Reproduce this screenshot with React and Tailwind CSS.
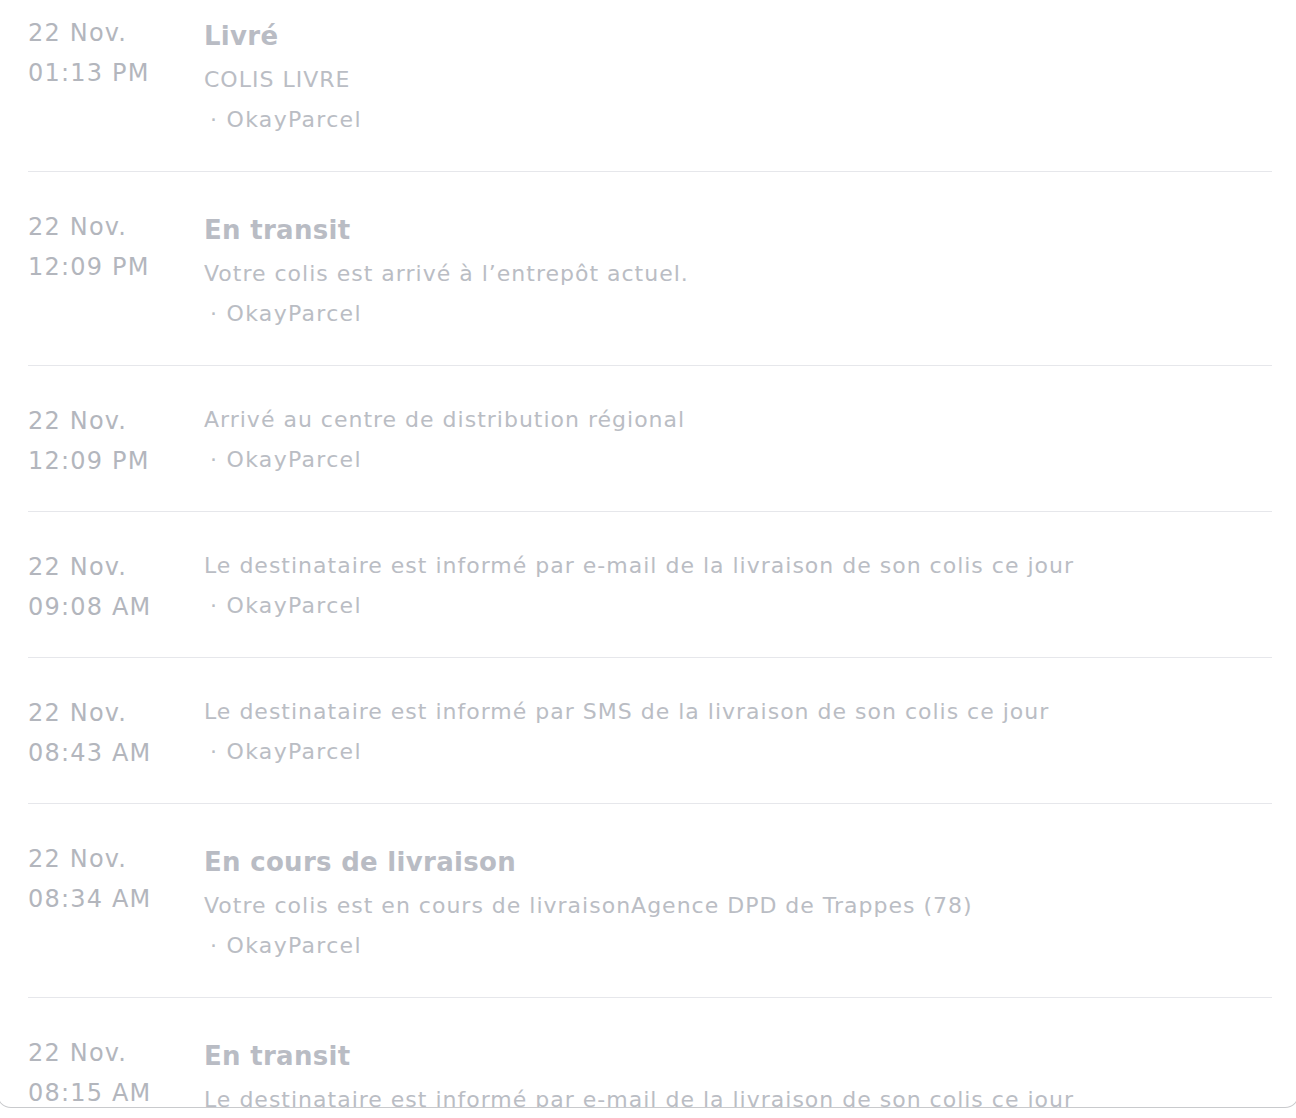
const events = [
  { date: '22 Nov.', time: '01:13 PM', title: 'Livré', desc: 'COLIS LIVRE' },
  { date: '22 Nov.', time: '12:09 PM', title: 'En transit', desc: 'Votre colis est arrivé à l’entrepôt actuel.' },
  { date: '22 Nov.', time: '12:09 PM', desc: 'Arrivé au centre de distribution régional' },
  { date: '22 Nov.', time: '09:08 AM', desc: 'Le destinataire est informé par e-mail de la livraison de son colis ce jour' },
  { date: '22 Nov.', time: '08:43 AM', desc: 'Le destinataire est informé par SMS de la livraison de son colis ce jour' },
  { date: '22 Nov.', time: '08:34 AM', title: 'En cours de livraison', desc: 'Votre colis est en cours de livraisonAgence DPD de Trappes (78)' },
  { date: '22 Nov.', time: '08:15 AM', title: 'En transit', desc: 'Le destinataire est informé par e-mail de la livraison de son colis ce jour' },
];

const TrackingRow = ({ item, first }) => (
  <div className={`flex border-b border-[#e6e7eb] pb-[31px] ${first ? 'pt-[12px]' : 'pt-[34px]'}`}>
    <div className="w-[176px] shrink-0 mt-[1px] -mb-[1px] text-[24px] leading-[40px] tracking-[1.2px] text-[#b3b6bd]">
      <div>{item.date}</div>
      <div>{item.time}</div>
    </div>
    <div className="flex-1 text-[22px] leading-[40px] tracking-[1px] text-[#babdc4]">
      {item.title && (
        <div className="pt-[1px] text-[26px] leading-[47px] font-bold tracking-[0.3px] text-[#b9bcc4]">{item.title}</div>
      )}
      <div>{item.desc}</div>
      <div className="pl-[6px] tracking-[1.3px]">· OkayParcel</div>
    </div>
  </div>
);

export default function App() {
  return (
    <div className="h-[1118px] w-full overflow-hidden bg-white" style={{ fontFamily: '"DejaVu Sans", "Liberation Sans", sans-serif' }}>
      <div className="-mx-[3px] h-[1108px] overflow-hidden rounded-b-[14px] border border-t-0 border-[#c9cacd]">
        <div className="pl-[30px] pr-[26px]">
          {events.map((item, i) => (
            <TrackingRow key={i} item={item} first={i === 0} />
          ))}
        </div>
      </div>
    </div>
  );
}
